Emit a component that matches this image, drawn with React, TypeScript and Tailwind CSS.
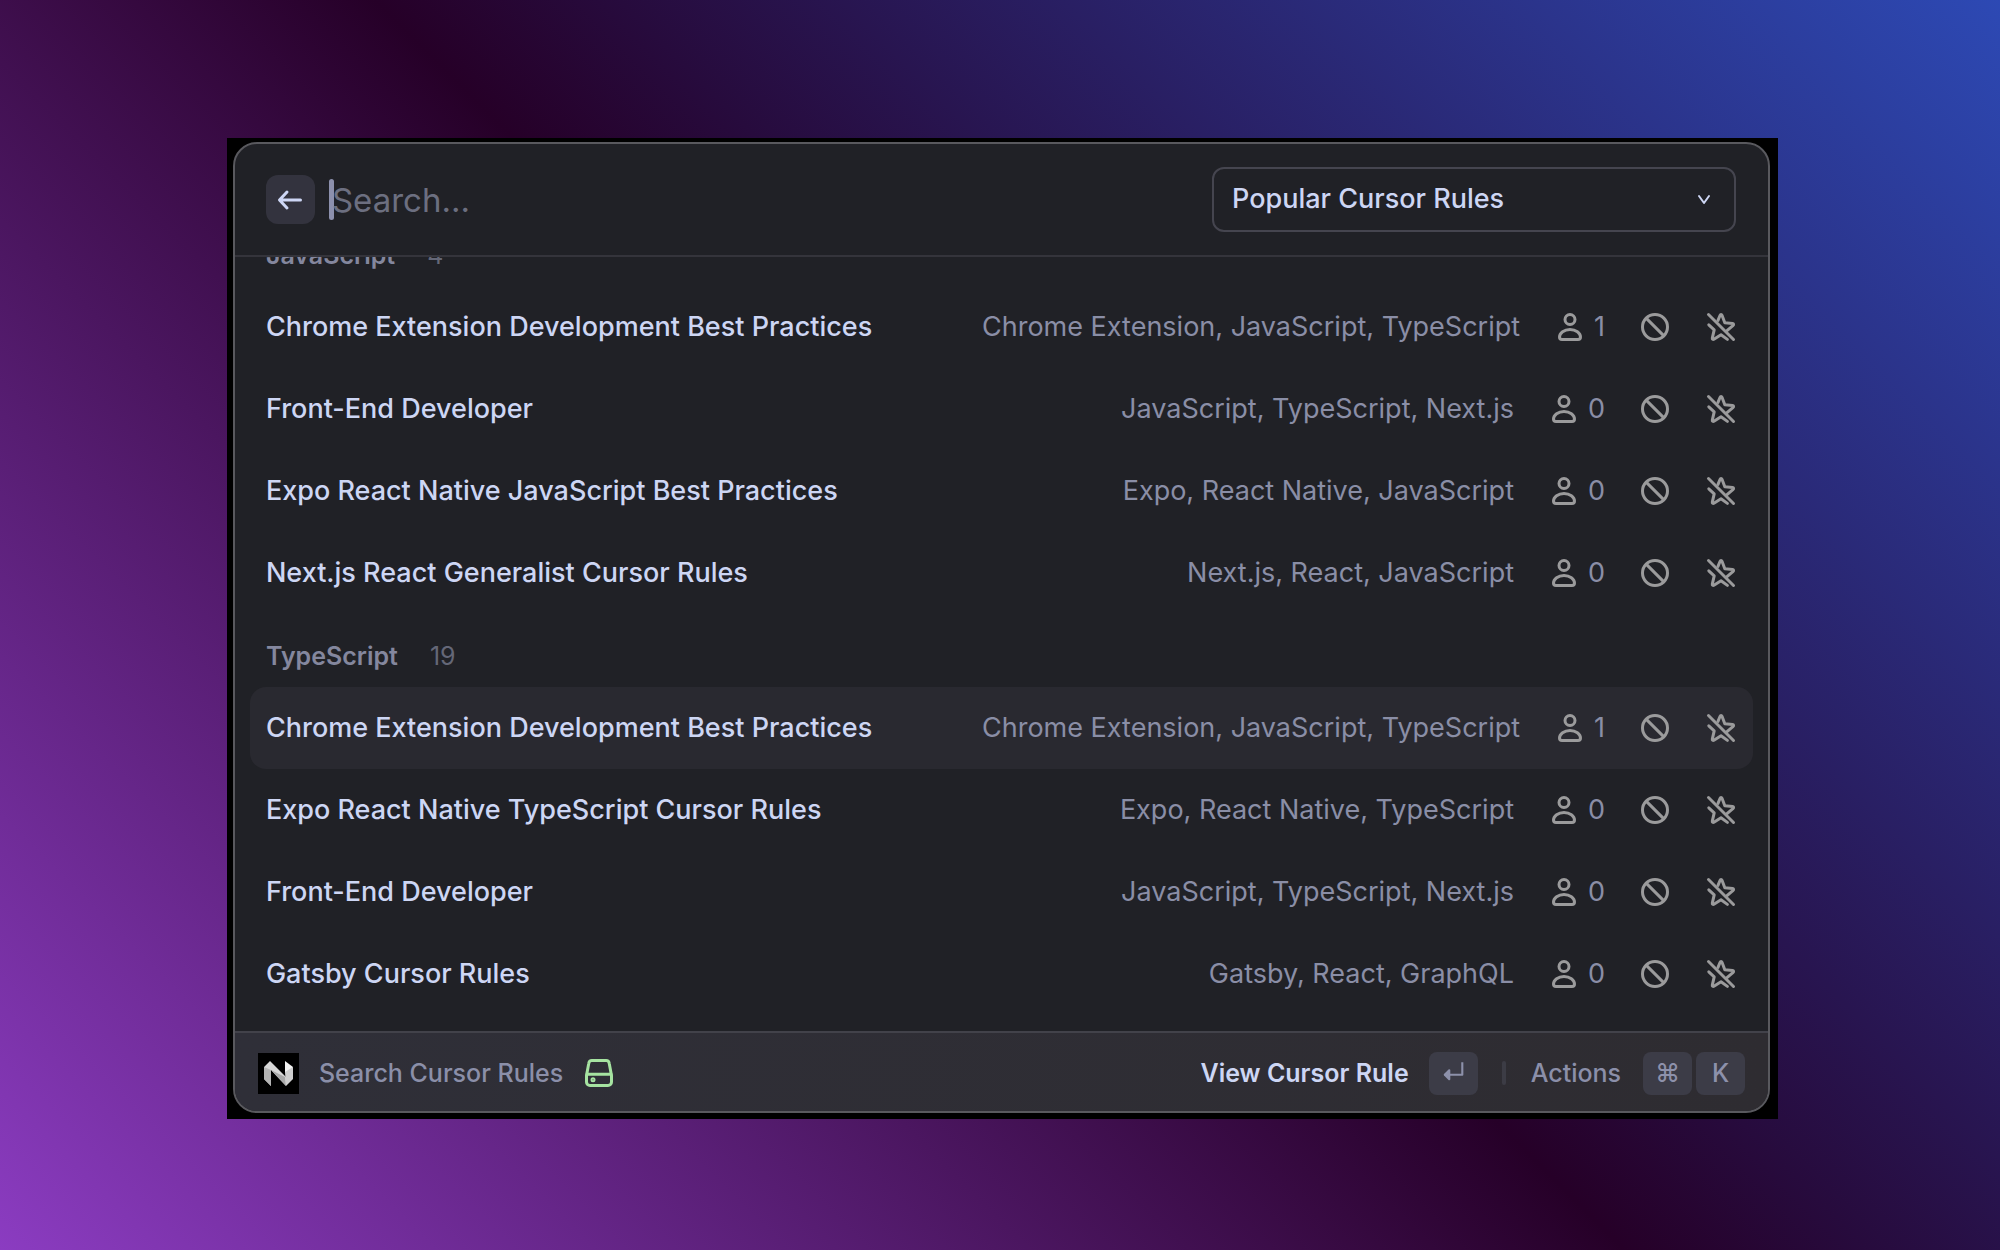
import React from "react";

type Rule = { title: string; tags: string; users: number; selected?: boolean };
type Section = { name: string; count: number; rules: Rule[] };

const sections: Section[] = [
  {
    name: "JavaScript",
    count: 4,
    rules: [
      { title: "Chrome Extension Development Best Practices", tags: "Chrome Extension, JavaScript, TypeScript", users: 1 },
      { title: "Front-End Developer", tags: "JavaScript, TypeScript, Next.js", users: 0 },
      { title: "Expo React Native JavaScript Best Practices", tags: "Expo, React Native, JavaScript", users: 0 },
      { title: "Next.js React Generalist Cursor Rules", tags: "Next.js, React, JavaScript", users: 0 },
    ],
  },
  {
    name: "TypeScript",
    count: 19,
    rules: [
      { title: "Chrome Extension Development Best Practices", tags: "Chrome Extension, JavaScript, TypeScript", users: 1, selected: true },
      { title: "Expo React Native TypeScript Cursor Rules", tags: "Expo, React Native, TypeScript", users: 0 },
      { title: "Front-End Developer", tags: "JavaScript, TypeScript, Next.js", users: 0 },
      { title: "Gatsby Cursor Rules", tags: "Gatsby, React, GraphQL", users: 0 },
    ],
  },
];

function Icon({ className = "size-8", width = 1.5, children }: { className?: string; width?: number; children: React.ReactNode }) {
  return (
    <svg viewBox="0 0 16 16" fill="none" stroke="currentColor" strokeWidth={width} strokeLinecap="round" strokeLinejoin="round" className={`shrink-0 ${className}`} aria-hidden="true">
      {children}
    </svg>
  );
}

const PersonIcon = () => (
  <Icon>
    <circle cx="8" cy="4.25" r="2.5" />
    <path d="M8 9.25c-2.9 0-5.25 1.75-5.25 3.75 0 .75.5 1.25 1.25 1.25h8c.75 0 1.25-.5 1.25-1.25 0-2-2.35-3.75-5.25-3.75Z" />
  </Icon>
);

const BanIcon = () => (
  <Icon>
    <circle cx="8" cy="8" r="6.25" />
    <path d="m3.7 3.7 8.6 8.6" />
  </Icon>
);

const StarOffIcon = () => (
  <Icon>
    <path d="m1.75 1.75 12.5 12.5" />
    <path d="m6.5 4.7 1.05-2.55c.2-.5.75-.5.95 0l1.4 3.75 3.9.3c.5.05.65.6.3.95L11 9.8" />
    <path d="m1.9 6.9 2.7 2.5-.95 4.2c-.1.5.4.8.8.55L8 11.9l3.2 2.3" />
  </Icon>
);

function RuleRow({ rule }: { rule: Rule }) {
  return (
    <li className={`flex h-[82px] items-center justify-between rounded-2xl px-4 ${rule.selected ? "bg-[#292930]" : ""}`}>
      <a href="#rule" className="text-[27px] leading-9 font-medium text-[#cdd6f4]">{rule.title}</a>
      <div className="flex items-center gap-[34px] text-[27px] leading-9 text-[#8a8ea6]">
        <span>{rule.tags}</span>
        <span className="flex items-center gap-2">
          <span className="text-[#9b9b9c]"><PersonIcon /></span>
          {rule.users}
        </span>
        <span className="text-[#9b9b9c]"><BanIcon /></span>
        <span className="text-[#9b9b9c]"><StarOffIcon /></span>
      </div>
    </li>
  );
}

function Key({ children }: { children: React.ReactNode }) {
  return (
    <kbd className="flex h-[43px] w-[49px] items-center justify-center rounded-lg bg-[#3c3c47] font-['Inter',sans-serif] text-[25px] leading-8 font-medium text-[#8d91ab]">
      {children}
    </kbd>
  );
}

export default function App() {
  return (
    <main className="flex min-h-screen items-center justify-center bg-[linear-gradient(45deg,#8b3cc1_0%,#260028_50%,#2d49b4_100%)] pt-[7px] pl-[5px] font-['Inter',sans-serif]">
      <div className="w-[77.75%] bg-black pt-1 pr-2 pb-1.5 pl-1.5">
        <div className="flex flex-col overflow-hidden rounded-3xl border-2 border-[#59595e] bg-[#202126]">
          <header className="flex h-[113px] items-center justify-between border-b-2 border-[#34343b] pr-8 pl-[31px]">
            <div className="flex items-center gap-3.5">
              <button type="button" aria-label="Back" className="flex size-[49px] items-center justify-center rounded-xl bg-[#33333e] text-[#cdd6f4]">
                <Icon>
                  <path d="M3 8h10.25M6.5 4 2.75 8l3.75 4" />
                </Icon>
              </button>
              <div className="flex items-center">
                <span className="h-[41px] w-[5px] rounded-sm bg-[#8c90ad]" />
                <input aria-label="Search" placeholder="Search..." className="-ml-0.5 w-96 bg-transparent text-[33px] leading-10 text-[#cdd6f4] outline-none placeholder:text-[#6c6f80]" />
              </div>
            </div>
            <div className="relative flex w-[524px] items-center text-[#cdd6f4]">
              <select aria-label="Rule set" className="h-[65px] w-full appearance-none rounded-xl border-2 border-[#45454f] bg-transparent pr-14 pb-0.5 pl-[18px] text-[27px] leading-9 font-medium">
                <option>Popular Cursor Rules</option>
              </select>
              <svg viewBox="0 0 16 12" fill="none" stroke="currentColor" strokeWidth="2" strokeLinecap="round" strokeLinejoin="round" className="pointer-events-none absolute right-6 h-3 w-4" aria-hidden="true">
                <path d="m3 2 5 7 5-7" />
              </svg>
            </div>
          </header>

          <div className="flex h-[774px] flex-col justify-end overflow-hidden px-[15px] pb-4">
            {sections.map((section) => (
              <section key={section.name}>
                <h2 className="flex h-[73px] items-center gap-8 px-4 pt-2.5 text-[25px] leading-8 font-semibold text-[#84879e]">
                  {section.name}
                  <span className="font-normal text-[#646777]">{section.count}</span>
                </h2>
                <ul>
                  {section.rules.map((rule) => (
                    <RuleRow key={rule.title} rule={rule} />
                  ))}
                </ul>
              </section>
            ))}
          </div>

          <footer className="flex h-20 items-center justify-between border-t-2 border-[#42424a] bg-linear-to-r from-[#2f2f38] to-[#2e2c31] px-[23px] pt-0.5 text-[25px] leading-8 font-medium text-[#8b8fa9]">
            <div className="flex items-center">
              <svg viewBox="0 0 41 41" className="size-[41px]" aria-hidden="true">
                <path fill="#000" d="M0 0h41v41H0z" />
                <path fill="#d8d8d8" d="M6 14 12 8l16 16v9L13 17v16l-7-7z" />
                <path fill="#b4b4b4" d="M6 14v12l7 7V17z" />
                <path fill="#f4f4f4" d="m27 8 8 6-3 8-5-3z" />
                <path fill="#a9a9a9" d="m13 17 14 7 1 9z" />
                <path fill="#cfcfcf" d="m35 14v12l-7 7-1-14z" />
              </svg>
              <span className="pl-5">Search Cursor Rules</span>
              <span className="pl-5 text-[#a6e3a1]">
                <Icon>
                  <path d="M1.75 9.25 2.9 3.1c.13-.8.7-1.35 1.5-1.35h7.2c.8 0 1.37.55 1.5 1.35l1.15 6.15v3.25c0 1-.75 1.75-1.75 1.75h-9c-1 0-1.75-.75-1.75-1.75ZM1.75 8.6h12.5" />
                  <circle cx="5" cy="11.4" r=".5" />
                </Icon>
              </span>
            </div>
            <div className="flex items-center">
              <button type="button" className="flex items-center gap-5 font-semibold text-[#cdd6f4]">
                View Cursor Rule
                <Key>
                  <Icon className="size-6" width={1.4}>
                    <path strokeLinecap="square" d="M14.2 1.5v7.7H3" />
                    <path fill="currentColor" d="M5.5 6.2v6l-3-3z" />
                  </Icon>
                </Key>
              </button>
              <span className="mr-[25px] ml-6 h-6 w-1 rounded-full bg-[#3c3c45]" />
              <button type="button" className="flex items-center">
                Actions
                <span className="flex gap-1 pl-[22px]">
                  <Key>⌘</Key>
                  <Key>K</Key>
                </span>
              </button>
            </div>
          </footer>
        </div>
      </div>
    </main>
  );
}
